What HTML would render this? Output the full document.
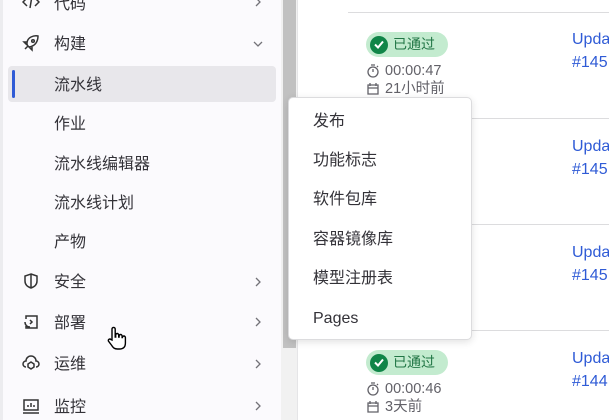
<!DOCTYPE html>
<html><head><meta charset="utf-8"><style>
*{margin:0;padding:0;box-sizing:border-box}
body{width:609px;height:420px;overflow:hidden;position:relative;background:#fff;font-family:"Liberation Sans","Noto Sans CJK SC",sans-serif;}
.side{position:absolute;left:0;top:0;width:281px;height:420px;background:#fbfafd;border-left:3px solid #ececef}
.it{position:absolute;left:54px;font-size:16px;color:#333238;line-height:20px;margin-top:2px}
.ic{position:absolute;left:22px;width:18px;height:18px}
.chev{position:absolute;left:254px;width:8px;height:10px}
.sel{position:absolute;left:8px;top:66px;width:268px;height:36px;background:#e8e7eb;border-radius:4px}
.bar{position:absolute;left:12px;top:70px;width:3px;height:28px;background:#2f5bd6;border-radius:2px}
.track{position:absolute;left:281px;top:0;width:17px;height:420px;background:#f1f1f1}
.thumb{position:absolute;left:283px;top:0;width:13px;height:348px;background:#c1c1c1}
.sep{position:absolute;left:348px;right:0;height:1px;background:#dcdcde}
.badge{position:absolute;left:366px;width:82px;height:25px;background:#c3ebcf;border-radius:13px;font-size:14px;color:#217645;line-height:25px;padding-left:27px}
.badge:before{content:"";position:absolute;left:4px;top:3.5px;width:18px;height:18px;border-radius:50%;background:#108548}
.badge svg{position:absolute;left:8px;top:8px}
.meta{position:absolute;left:385px;font-size:14.5px;color:#626168;line-height:16px}
.mi{position:absolute;left:366px}
.link{position:absolute;left:572px;font-size:16px;color:#2f5bd6;line-height:22px}
.menu{position:absolute;left:288px;top:97px;width:184px;height:243px;background:#fff;border:1px solid #dcdcde;border-radius:5px;box-shadow:0 2px 8px rgba(0,0,0,.12)}
.mt{position:absolute;left:24px;font-size:16px;color:#333238;line-height:20px;margin-top:2px}
</style></head><body>
<div class="side">
</div>
<div class="sel"></div><div class="bar"></div>
<svg class="ic" style="top:-7px" viewBox="0 0 18 18" fill="none" stroke="#333" stroke-width="1.5"><path d="M5 5L1 9l4 4M13 5l4 4-4 4M10 3L8 15"/></svg>
<div class="it" style="top:-7px">代码</div>
<svg class="chev" style="top:-3px" viewBox="0 0 8 10" fill="none" stroke="#737278" stroke-width="1.3"><path d="M2 1l4 4-4 4"/></svg>
<svg class="ic" style="top:34px" viewBox="0 0 18 18" fill="none" stroke="#333" stroke-width="1.5"><path d="M6 12C4 10 5 5 9 3s7-1 7-1 0 4-2 7-7 5-8 3zM6 12l-3 3M5 8H2l3 3M10 13v3l-3-3"/><circle cx="11" cy="7" r="1.3"/></svg>
<div class="it" style="top:33px">构建</div>
<svg style="position:absolute;left:253px;top:40px" width="10" height="8" viewBox="0 0 10 8" fill="none" stroke="#737278" stroke-width="1.3"><path d="M1 2l4 4 4-4"/></svg>
<div class="it" style="top:74px">流水线</div>
<div class="it" style="top:113px">作业</div>
<div class="it" style="top:153px">流水线编辑器</div>
<div class="it" style="top:192px">流水线计划</div>
<div class="it" style="top:231px">产物</div>
<svg class="ic" style="top:272px" viewBox="0 0 18 18" fill="none" stroke="#333" stroke-width="1.5"><path d="M9 2l6 2v5c0 4-3 6-6 7-3-1-6-3-6-7V4zM9 2v14"/></svg>
<div class="it" style="top:271px">安全</div>
<svg class="chev" style="top:277px" viewBox="0 0 8 10" fill="none" stroke="#737278" stroke-width="1.3"><path d="M2 1l4 4-4 4"/></svg>
<svg class="ic" style="top:313px" viewBox="0 0 18 18" fill="none" stroke="#333" stroke-width="1.5"><path d="M4 6V3h11v12H4v-2M3 9c0 3 2 5 5 5M8 7l2 2-2 2"/></svg>
<div class="it" style="top:312px">部署</div>
<svg class="chev" style="top:317px" viewBox="0 0 8 10" fill="none" stroke="#737278" stroke-width="1.3"><path d="M2 1l4 4-4 4"/></svg>
<svg class="ic" style="top:354px" viewBox="0 0 18 18" fill="none" stroke="#333" stroke-width="1.5"><path d="M4 13a3 3 0 010-6 5 5 0 0110 0 3 3 0 010 6"/><path d="M9 8l3 2v3l-3 2-3-2v-3z"/></svg>
<div class="it" style="top:353px">运维</div>
<svg class="chev" style="top:359px" viewBox="0 0 8 10" fill="none" stroke="#737278" stroke-width="1.3"><path d="M2 1l4 4-4 4"/></svg>
<svg class="ic" style="top:397px" viewBox="0 0 18 18" fill="none" stroke="#333" stroke-width="1.5"><path d="M2 3h14v10H2zM1 16h16M6 10V8M9 10V6M12 10V8"/></svg>
<div class="it" style="top:396px">监控</div>
<svg class="chev" style="top:401px" viewBox="0 0 8 10" fill="none" stroke="#737278" stroke-width="1.3"><path d="M2 1l4 4-4 4"/></svg>
<svg style="position:absolute;left:105px;top:326px" width="24" height="26" viewBox="0 0 24 26"><path d="M7 14V3a1.6 1.6 0 013.2 0v8h.5V9a1.5 1.5 0 013 0v2h.4v-1a1.5 1.5 0 013 0v1.5h.3a1.5 1.5 0 013 0V17c0 4-2 6-6 6h-2c-3 0-4-1-6-4l-3-4a1.5 1.5 0 012.5-1.5z" fill="#fff" stroke="#000" stroke-width="1.4"/></svg>

<div class="track"></div><div class="thumb"></div>
<div style="position:absolute;left:297px;top:0;width:1px;height:420px;background:#e5e5e7"></div>

<div class="sep" style="top:12px"></div>
<div class="sep" style="top:118px"></div>
<div class="sep" style="top:224px"></div>
<div class="sep" style="top:330px"></div>

<div class="badge" style="top:32px"><svg width="10" height="9" viewBox="0 0 10 9" fill="none" stroke="#fff" stroke-width="2"><path d="M1 4.5l3 3 5-6"/></svg>已通过</div>
<svg class="mi" style="top:64px" width="14" height="14" viewBox="0 0 14 14" fill="none" stroke="#626168" stroke-width="1.3"><circle cx="7" cy="8" r="5"/><path d="M5 1h4M7 8V5M11 3l1-1"/></svg>
<div class="meta" style="top:63px">00:00:47</div>
<svg class="mi" style="top:82px" width="14" height="14" viewBox="0 0 14 14" fill="none" stroke="#626168" stroke-width="1.3"><path d="M2 3h10v9H2zM2 6h10M4 1v3M10 1v3"/></svg>
<div class="meta" style="top:81px">21小时前</div>
<div class="link" style="top:29px">Upda</div><div class="link" style="top:52px">#145</div>
<div class="link" style="top:136px">Upda</div><div class="link" style="top:159px">#145</div>
<div class="link" style="top:242px">Upda</div><div class="link" style="top:265px">#145</div>
<div class="link" style="top:348px">Upda</div><div class="link" style="top:371px">#144</div>

<div class="badge" style="top:350px"><svg width="10" height="9" viewBox="0 0 10 9" fill="none" stroke="#fff" stroke-width="2"><path d="M1 4.5l3 3 5-6"/></svg>已通过</div>
<svg class="mi" style="top:382px" width="14" height="14" viewBox="0 0 14 14" fill="none" stroke="#626168" stroke-width="1.3"><circle cx="7" cy="8" r="5"/><path d="M5 1h4M7 8V5M11 3l1-1"/></svg>
<div class="meta" style="top:381px">00:00:46</div>
<svg class="mi" style="top:400px" width="14" height="14" viewBox="0 0 14 14" fill="none" stroke="#626168" stroke-width="1.3"><path d="M2 3h10v9H2zM2 6h10M4 1v3M10 1v3"/></svg>
<div class="meta" style="top:399px">3天前</div>

<div class="menu">
<div class="mt" style="top:12px">发布</div>
<div class="mt" style="top:51px">功能标志</div>
<div class="mt" style="top:90px">软件包库</div>
<div class="mt" style="top:130px">容器镜像库</div>
<div class="mt" style="top:169px">模型注册表</div>
<div class="mt" style="top:209px">Pages</div>
</div>
</body></html>
